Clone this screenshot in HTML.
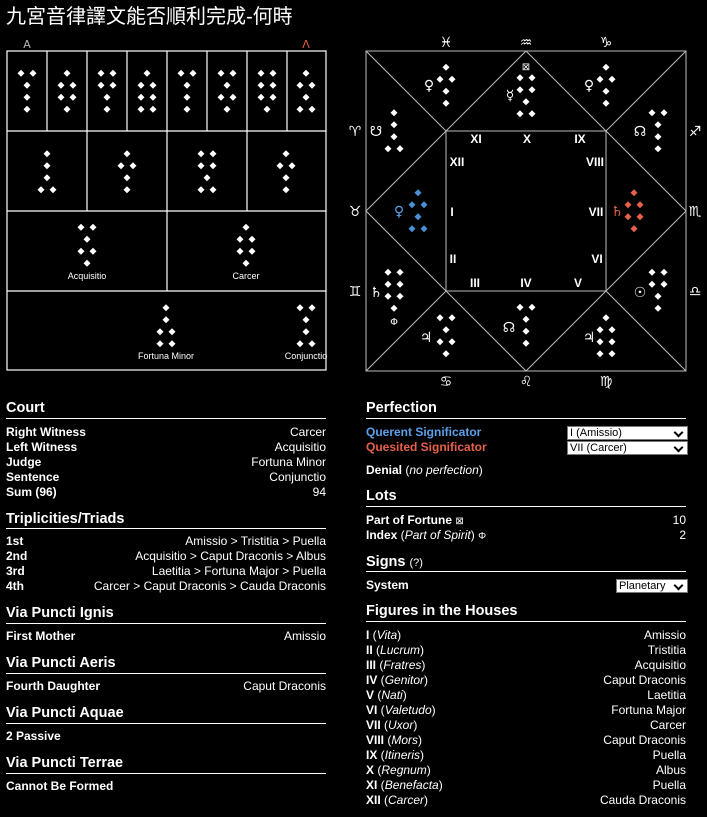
<!DOCTYPE html>
<html><head><meta charset="utf-8">
<style>
html,body{margin:0;padding:0;background:#000;width:707px;height:817px;overflow:hidden;position:relative;color:#fff;font-family:"Liberation Sans",Arial,sans-serif}
.t{position:absolute;white-space:nowrap}
#title{left:6px;top:5px;font-size:20px;font-family:"Liberation Sans","Noto Sans CJK TC",sans-serif;line-height:24px}
.h{position:absolute;font-weight:bold;font-size:14.5px;line-height:16px}
.hl{position:absolute;height:1px;background:#fff}
.row{position:absolute;font-size:12px;line-height:15px;display:flex;justify-content:space-between}
.row b{font-weight:bold}
.sel{position:absolute;background:#fff;color:#000;font-size:11px;line-height:12px;height:12px;border:1px solid #777;padding-left:2px;box-sizing:content-box}
.sel:after{content:"";position:absolute;right:5px;top:2px;width:5px;height:5px;border-right:2px solid #000;border-bottom:2px solid #000;transform:rotate(45deg)}
svg{position:absolute;left:0;top:0}
</style></head><body>
<div id="title" class="t">九宮音律譯文能否順利完成-何時</div>
<svg width="707" height="400" id="s">
<g stroke="#fff" stroke-width="1.2" fill="none">
<rect x="7" y="51" width="319" height="319"/>
<line x1="7" y1="131" x2="326" y2="131"/><line x1="7" y1="211" x2="326" y2="211"/><line x1="7" y1="291" x2="326" y2="291"/>
<line x1="47" y1="51" x2="47" y2="131"/><line x1="87" y1="51" x2="87" y2="211"/><line x1="127" y1="51" x2="127" y2="131"/>
<line x1="167" y1="51" x2="167" y2="291"/><line x1="207" y1="51" x2="207" y2="131"/><line x1="247" y1="51" x2="247" y2="211"/><line x1="287" y1="51" x2="287" y2="131"/>
</g>
<g stroke="#bbb" stroke-width="1" fill="none">
<rect x="366" y="51" width="320" height="320"/>
<rect x="446" y="131" width="160" height="160"/>
<path d="M366 51L446 131M686 51L606 131M366 371L446 291M686 371L606 291M526 51L446 131M526 51L606 131M366 211L446 131M366 211L446 291M686 211L606 131M686 211L606 291M526 371L446 291M526 371L606 291"/>
</g>
<g font-family="Liberation Sans,sans-serif" font-size="9" fill="#fff" text-anchor="middle">
<text x="87" y="279">Acquisitio</text><text x="246" y="279">Carcer</text>
<text x="166" y="359">Fortuna Minor</text><text x="306" y="359">Conjunctio</text>
</g>
<g font-family="DejaVu Sans,sans-serif" font-size="11" text-anchor="middle">
<text x="27" y="48" fill="#bbb">A</text><text x="306" y="48" fill="#e8604c">Λ</text>
</g>
<g font-family="Liberation Sans,sans-serif" font-size="12" font-weight="bold" fill="#fff" text-anchor="middle">
<text x="476" y="143">XI</text><text x="527" y="143">X</text><text x="580" y="143">IX</text>
<text x="457" y="166">XII</text><text x="595" y="166">VIII</text>
<text x="452" y="216">I</text><text x="596" y="216">VII</text>
<text x="453" y="263">II</text><text x="597" y="263">VI</text>
<text x="475" y="287">III</text><text x="526" y="287">IV</text><text x="578" y="287">V</text>
</g>
<g font-family="DejaVu Sans,sans-serif" font-size="14" fill="#fff" text-anchor="middle">
<text x="446" y="47">♓&#xFE0E;</text><text x="526" y="47">♒&#xFE0E;</text><text x="606" y="47">♑&#xFE0E;</text>
<text x="355" y="136">♈&#xFE0E;</text><text x="355" y="216">♉&#xFE0E;</text><text x="355" y="296">♊&#xFE0E;</text>
<text x="695" y="136">♐&#xFE0E;</text><text x="695" y="216">♏&#xFE0E;</text><text x="695" y="296">♎&#xFE0E;</text>
<text x="446" y="386">♋&#xFE0E;</text><text x="526" y="386">♌&#xFE0E;</text><text x="606" y="386">♍&#xFE0E;</text>
</g>
<g font-family="DejaVu Sans,sans-serif" font-size="14" fill="#fff" text-anchor="middle">
<text x="429" y="90">♀</text><text x="526" y="70" font-size="10">⊠</text><text x="510" y="100">☿</text><text x="589" y="90">♀</text>
<text x="376" y="136">☋</text><text x="640" y="136">☊</text>
<text x="399" y="216" fill="#5aa0ea">♀</text><text x="617" y="216" fill="#e8604c">♄</text>
<text x="376" y="297">♄</text><text x="394" y="325" font-size="10">Φ</text><text x="640" y="297">☉</text>
<text x="426" y="342">♃</text><text x="509" y="332">☊</text><text x="589" y="342">♃</text>
</g>
<g id="dots"></g>
</svg>
<script>
var F=[
[27,73.3,[2,1,1,1]],[67,73.3,[1,2,2,1]],[107,73.3,[2,2,1,1]],[147,73.3,[1,2,2,2]],[187,73.3,[2,1,1,1]],[227,73.3,[2,1,2,1]],[267,73.3,[2,2,2,1]],[306,73.3,[1,2,1,2]],
[47,153.7,[1,1,1,2]],[127,153.7,[1,2,1,1]],[207,153.7,[2,2,1,2]],[286,153.7,[1,2,1,1]],
[87,227.3,[2,1,2,1]],[246,227.3,[1,2,2,1]],[166,307.7,[1,1,2,2]],[306,307.7,[2,1,1,2]],
[446,67.3,[1,2,1,1]],[526,77.7,[2,2,1,2]],[606,67.3,[1,2,1,1]],
[394,112.7,[1,1,1,2]],[658,112.7,[2,1,1,1]],
[418,192.7,[1,2,1,2],"#4a90d9"],[634,192.7,[1,2,2,1],"#e8604c"],
[394,272.3,[2,2,2,1]],[658,272.3,[2,2,1,1]],
[446,317.7,[2,1,2,1]],[526,307.3,[2,1,1,1]],[606,317.7,[1,2,2,2]]];
var s="";
function d(x,y,c){s+='<polygon points="'+x+','+(y-3.5)+' '+(x+3.5)+','+y+' '+x+','+(y+3.5)+' '+(x-3.5)+','+y+'" fill="'+c+'"/>';}
F.forEach(function(f){var c=f[3]||"#fff";f[2].forEach(function(n,i){var y=f[1]+12*i;if(n==1)d(f[0],y,c);else{d(f[0]-6,y,c);d(f[0]+6,y,c);}});});
document.getElementById("dots").innerHTML=s;
</script>

<!-- Left column -->
<div class="h" style="left:6px;top:400px">Court</div><div class="hl" style="left:6px;width:320px;top:418px"></div>
<div class="row" style="left:6px;width:320px;top:425px"><b>Right Witness</b><span>Carcer</span></div>
<div class="row" style="left:6px;width:320px;top:440px"><b>Left Witness</b><span>Acquisitio</span></div>
<div class="row" style="left:6px;width:320px;top:455px"><b>Judge</b><span>Fortuna Minor</span></div>
<div class="row" style="left:6px;width:320px;top:470px"><b>Sentence</b><span>Conjunctio</span></div>
<div class="row" style="left:6px;width:320px;top:485px"><b>Sum (96)</b><span>94</span></div>
<div class="h" style="left:6px;top:511px">Triplicities/Triads</div><div class="hl" style="left:6px;width:320px;top:528px"></div>
<div class="row" style="left:6px;width:320px;top:534px"><b>1st</b><span>Amissio &gt; Tristitia &gt; Puella</span></div>
<div class="row" style="left:6px;width:320px;top:549px"><b>2nd</b><span>Acquisitio &gt; Caput Draconis &gt; Albus</span></div>
<div class="row" style="left:6px;width:320px;top:564px"><b>3rd</b><span>Laetitia &gt; Fortuna Major &gt; Puella</span></div>
<div class="row" style="left:6px;width:320px;top:579px"><b>4th</b><span>Carcer &gt; Caput Draconis &gt; Cauda Draconis</span></div>
<div class="h" style="left:6px;top:605px">Via Puncti Ignis</div><div class="hl" style="left:6px;width:320px;top:623px"></div>
<div class="row" style="left:6px;width:320px;top:629px"><b>First Mother</b><span>Amissio</span></div>
<div class="h" style="left:6px;top:655px">Via Puncti Aeris</div><div class="hl" style="left:6px;width:320px;top:673px"></div>
<div class="row" style="left:6px;width:320px;top:679px"><b>Fourth Daughter</b><span>Caput Draconis</span></div>
<div class="h" style="left:6px;top:705px">Via Puncti Aquae</div><div class="hl" style="left:6px;width:320px;top:723px"></div>
<div class="row" style="left:6px;width:320px;top:729px"><b>2 Passive</b><span></span></div>
<div class="h" style="left:6px;top:755px">Via Puncti Terrae</div><div class="hl" style="left:6px;width:320px;top:773px"></div>
<div class="row" style="left:6px;width:320px;top:779px"><b>Cannot Be Formed</b><span></span></div>

<!-- Right column -->
<div class="h" style="left:366px;top:400px">Perfection</div><div class="hl" style="left:366px;width:320px;top:418px"></div>
<div class="row" style="left:366px;width:320px;top:425px"><b style="color:#5aa0ea">Querent Significator</b></div>
<div class="sel" style="left:567px;top:426px;width:117px">I (Amissio)</div>
<div class="row" style="left:366px;width:320px;top:440px"><b style="color:#e8604c">Quesited Significator</b></div>
<div class="sel" style="left:567px;top:441px;width:117px">VII (Carcer)</div>
<div class="row" style="left:366px;width:320px;top:463px"><span><b>Denial</b> (<i>no perfection</i>)</span></div>
<div class="h" style="left:366px;top:488px">Lots</div><div class="hl" style="left:366px;width:320px;top:506px"></div>
<div class="row" style="left:366px;width:320px;top:513px"><span><b>Part of Fortune</b> <span style="font-size:10px">⊠</span></span><span>10</span></div>
<div class="row" style="left:366px;width:320px;top:528px"><span><b>Index</b> (<i>Part of Spirit</i>) <span style="font-size:10px">Φ</span></span><span>2</span></div>
<div class="h" style="left:366px;top:554px">Signs <span style="font-size:11px;font-weight:normal">(?)</span></div><div class="hl" style="left:366px;width:320px;top:571px"></div>
<div class="row" style="left:366px;width:320px;top:578px"><b>System</b></div>
<div class="sel" style="left:616px;top:579px;width:68px">Planetary</div>
<div class="h" style="left:366px;top:603px">Figures in the Houses</div><div class="hl" style="left:366px;width:320px;top:621px"></div>
<div class="row" style="left:366px;width:320px;top:628px"><span><b>I</b> (<i>Vita</i>)</span><span>Amissio</span></div>
<div class="row" style="left:366px;width:320px;top:643px"><span><b>II</b> (<i>Lucrum</i>)</span><span>Tristitia</span></div>
<div class="row" style="left:366px;width:320px;top:658px"><span><b>III</b> (<i>Fratres</i>)</span><span>Acquisitio</span></div>
<div class="row" style="left:366px;width:320px;top:673px"><span><b>IV</b> (<i>Genitor</i>)</span><span>Caput Draconis</span></div>
<div class="row" style="left:366px;width:320px;top:688px"><span><b>V</b> (<i>Nati</i>)</span><span>Laetitia</span></div>
<div class="row" style="left:366px;width:320px;top:703px"><span><b>VI</b> (<i>Valetudo</i>)</span><span>Fortuna Major</span></div>
<div class="row" style="left:366px;width:320px;top:718px"><span><b>VII</b> (<i>Uxor</i>)</span><span>Carcer</span></div>
<div class="row" style="left:366px;width:320px;top:733px"><span><b>VIII</b> (<i>Mors</i>)</span><span>Caput Draconis</span></div>
<div class="row" style="left:366px;width:320px;top:748px"><span><b>IX</b> (<i>Itineris</i>)</span><span>Puella</span></div>
<div class="row" style="left:366px;width:320px;top:763px"><span><b>X</b> (<i>Regnum</i>)</span><span>Albus</span></div>
<div class="row" style="left:366px;width:320px;top:778px"><span><b>XI</b> (<i>Benefacta</i>)</span><span>Puella</span></div>
<div class="row" style="left:366px;width:320px;top:793px"><span><b>XII</b> (<i>Carcer</i>)</span><span>Cauda Draconis</span></div>
</body></html>
